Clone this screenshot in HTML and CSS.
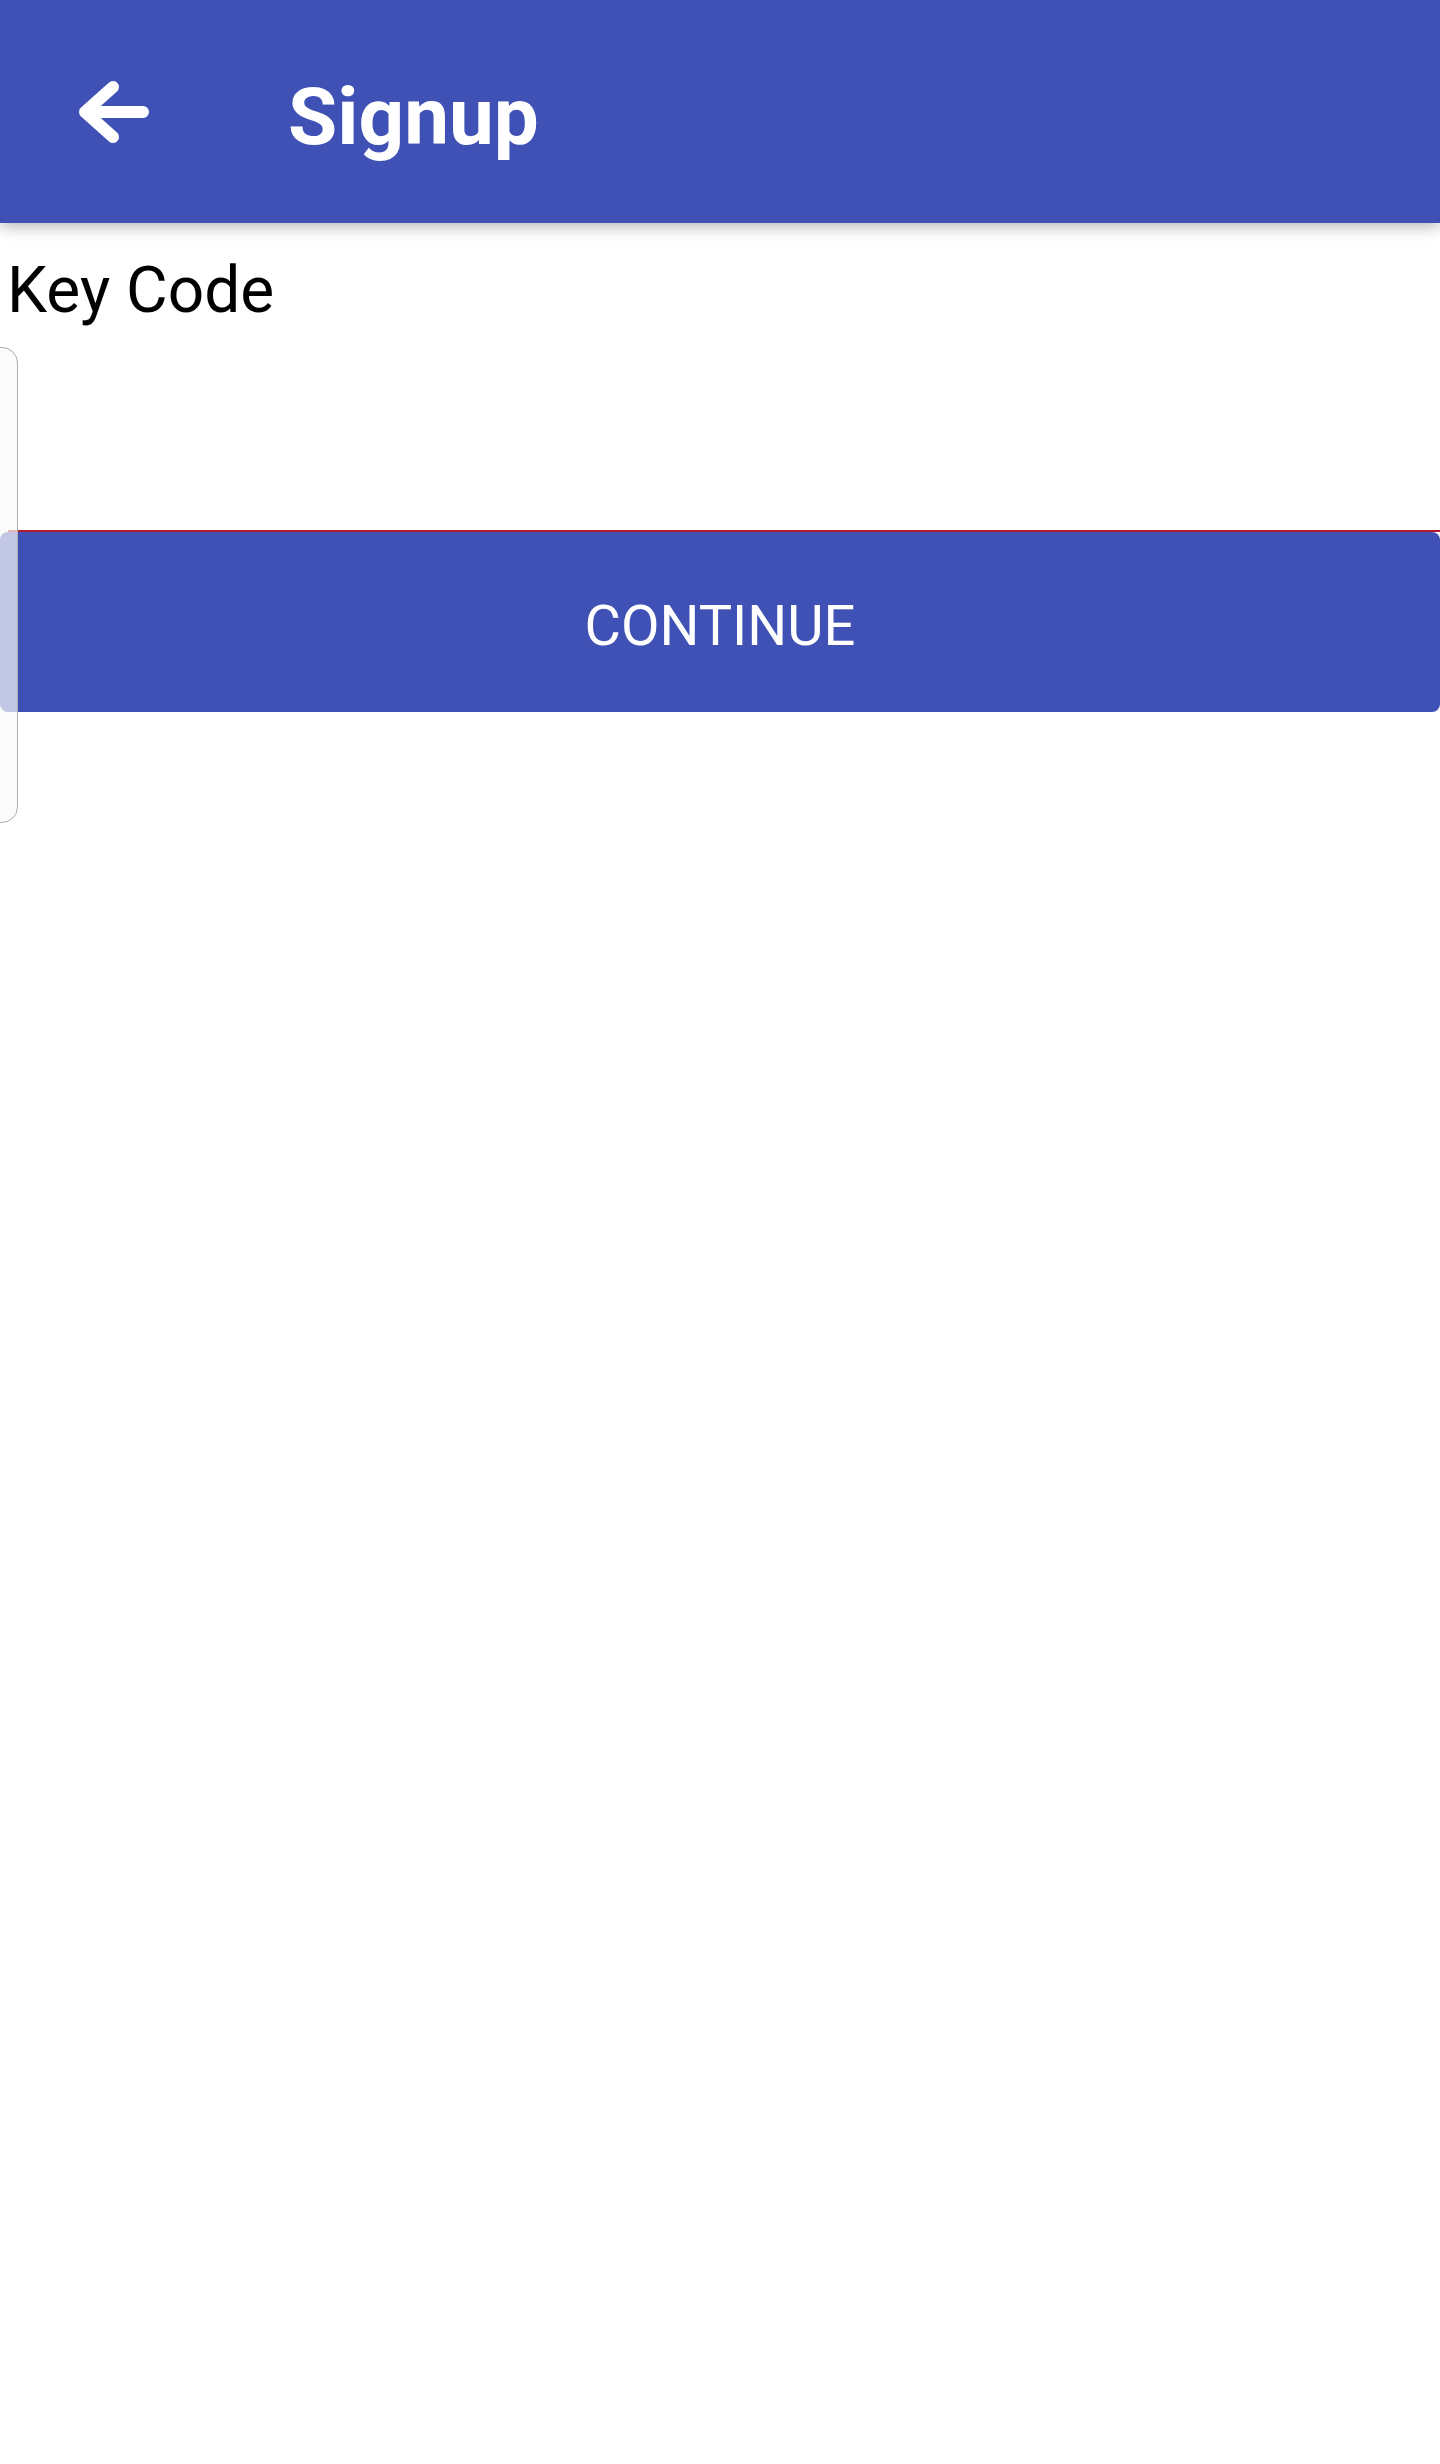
FILE: index.html
```html
<!DOCTYPE html>
<html lang="en">
<head>
<meta charset="utf-8">
<title>Signup</title>
<link rel="stylesheet" href="styles.css">
</head>
<body>
<header class="appbar">
  <svg class="back" width="80" height="80" viewBox="0 0 80 80" aria-label="Back">
    <path d="M41 15 L13 40 L41 65 M13 40 H71" fill="none" stroke="#fff" stroke-width="12" stroke-linecap="round" stroke-linejoin="round"/>
  </svg>
  <h1 class="title">Signup</h1>
</header>
<main class="content">
  <label class="label" for="key">Key Code</label>
  <div class="field"></div>
  <button class="btn" type="button">Continue</button>
</main>
<div class="side-box"></div>
</body>
</html>
```

FILE: styles.css
```css
html, body {
  margin: 0;
  padding: 0;
  background: #fff;
}
body {
  font-family: Roboto, "Noto Sans", sans-serif;
  width: 1440px;
  min-height: 2464px;
  position: relative;
  overflow: hidden;
}
.appbar {
  height: 223px;
  background: #3f51b5;
  box-shadow: 0 4px 14px rgba(0, 0, 0, 0.28);
  display: flex;
  align-items: flex-start;
  position: relative;
  z-index: 2;
}
.back {
  display: block;
  margin-top: 72px;
  margin-left: 72px;
  flex: none;
}
.title {
  margin: 70px 0 0 136px;
  font-size: 80px;
  font-weight: 700;
  color: #fff;
  line-height: normal;
}
.content {
  display: flex;
  flex-direction: column;
}
.label {
  margin-top: 30px;
  padding-left: 7px;
  font-size: 64px;
  line-height: normal;
  color: #000;
}
.field {
  margin-left: 8px;
  height: 202px;
  border-bottom: 2px solid #b0192b;
}
.btn {
  height: 180px;
  width: 100%;
  margin: 0;
  border: 0;
  border-radius: 8px;
  background: #3f51b5;
  color: #fff;
  font-family: Roboto, "Noto Sans", sans-serif;
  font-size: 56px;
  text-transform: uppercase;
  line-height: 1;
  padding: 8px 0 0;
  display: flex;
  align-items: center;
  justify-content: center;
}
.side-box {
  position: absolute;
  left: -22px;
  top: 347px;
  width: 38px;
  height: 474px;
  border: 1.5px solid #adadad;
  border-radius: 16px;
  background: rgba(250, 250, 250, 0.7);
}
```
